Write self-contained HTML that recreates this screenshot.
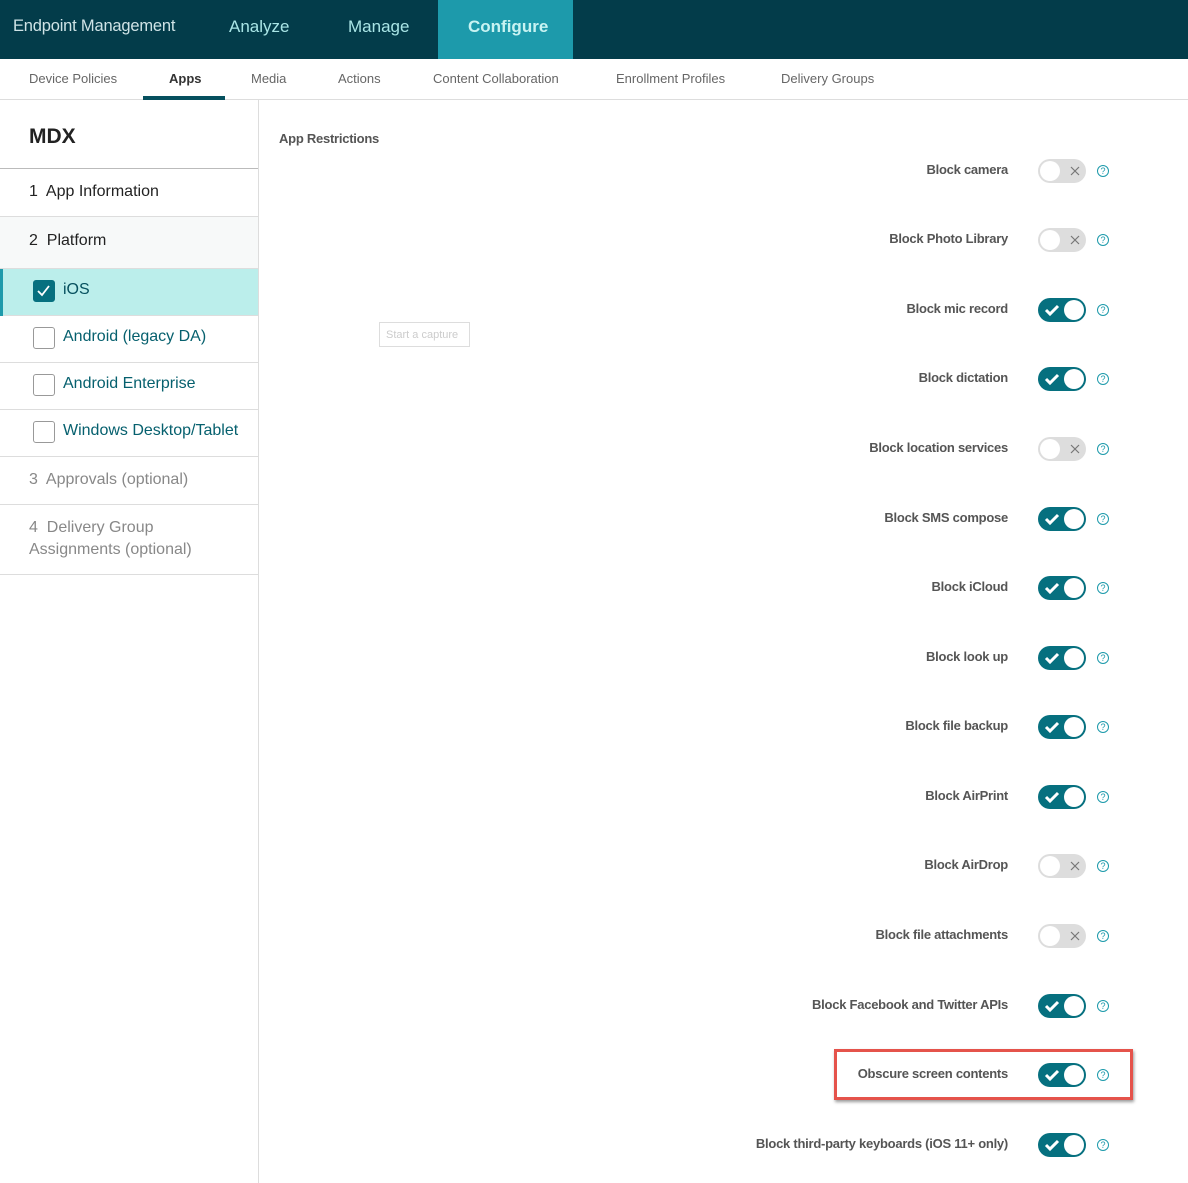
<!DOCTYPE html>
<html><head><meta charset="utf-8"><style>
*{box-sizing:border-box;margin:0;padding:0}
body{width:1188px;height:1183px;position:relative;overflow:hidden;background:#fff;font-family:"Liberation Sans",sans-serif;color:#333}
.top{position:absolute;left:0;top:0;width:1188px;height:59px;background:#033c4a}
.top span{position:absolute;top:17px;font-size:17px;color:#a9e5e6}
.cfg{position:absolute;left:438px;top:0;width:135px;height:59px;background:#1d9aab}
.sub{position:absolute;top:59px;left:0;width:1188px;height:41px;border-bottom:1px solid #ddd}
.sub span{position:absolute;top:12px;font-size:13px;color:#666}
.side{position:absolute;left:0;top:100px;width:259px;height:1083px;border-right:1px solid #ddd}
.row{position:absolute;left:0;width:258px;border-bottom:1px solid #ddd;font-size:16px}
.cb{position:absolute;left:34px;width:22px;height:22px;border:1.5px solid #999;border-radius:3px;background:#fff}
.lbl{position:absolute;right:180px;font-size:13px;font-weight:bold;color:#555;white-space:nowrap;letter-spacing:-0.25px}
.tg{position:absolute;left:1038px;width:48px;height:24px;border-radius:12px}
.on{background:#06707f}.off{background:#ddd}
.knob{position:absolute;top:2px;width:20px;height:20px;border-radius:10px;background:#fff}
.hp{position:absolute;left:1097px;width:12px;height:12px;border:1px solid #1d9aab;border-radius:50%;font-size:9px;line-height:10px;text-align:center;color:#1d9aab}
</style></head><body>
<div class="top">
<span style="left:13px;color:#cfe3e6;font-size:16.5px;letter-spacing:-0.2px">Endpoint Management</span>
<div class="cfg"></div>
<span style="left:229px">Analyze</span>
<span style="left:348px">Manage</span>
<span style="left:468px;font-weight:bold;color:#c8f3f2">Configure</span>
</div>
<div class="sub">
<span style="left:29px">Device Policies</span>
<span style="left:169px;color:#333;font-weight:bold">Apps</span>
<div style="position:absolute;left:143px;top:37px;width:82px;height:4px;background:#06505e"></div>
<span style="left:251px">Media</span>
<span style="left:338px">Actions</span>
<span style="left:433px">Content Collaboration</span>
<span style="left:616px">Enrollment Profiles</span>
<span style="left:781px">Delivery Groups</span>
</div>
<div class="side">
<div class="row" style="top:0;height:69px;border-bottom:1.5px solid #bbb"><span style="position:absolute;left:29px;top:25px;font-size:21px;font-weight:bold;color:#222">MDX</span></div>
<div class="row" style="top:69px;height:48px"><span style="position:absolute;left:29px;top:14px;color:#222">1&nbsp; App Information</span></div>
<div class="row" style="top:117px;height:52px;background:#f7f9f9"><span style="position:absolute;left:29px;top:15px;color:#222">2&nbsp; Platform</span></div>
<div class="row" style="top:169px;height:47px;background:#bbeeeb"><div style="position:absolute;left:0;top:0;width:3px;height:47px;background:#1d9aab"></div>
<div class="cb" style="top:11px;left:33px;background:#06707f;border-color:#06707f"><svg width="19" height="19" viewBox="0 0 19 19" style="position:absolute;left:0;top:0"><path d="M4 10l4 4 7-9" stroke="#fff" stroke-width="1.8" fill="none"/></svg></div>
<span style="position:absolute;left:63px;top:12px;color:#06505e">iOS</span></div>
<div class="row" style="top:216px;height:47px"><div class="cb" style="top:11px;left:33px"></div><span style="position:absolute;left:63px;top:12px;color:#06606e">Android (legacy DA)</span></div>
<div class="row" style="top:263px;height:47px"><div class="cb" style="top:11px;left:33px"></div><span style="position:absolute;left:63px;top:12px;color:#06606e">Android Enterprise</span></div>
<div class="row" style="top:310px;height:47px"><div class="cb" style="top:11px;left:33px"></div><span style="position:absolute;left:63px;top:12px;color:#06606e">Windows Desktop/Tablet</span></div>
<div class="row" style="top:357px;height:48px"><span style="position:absolute;left:29px;top:14px;color:#888">3&nbsp; Approvals (optional)</span></div>
<div class="row" style="top:405px;height:70px"><span style="position:absolute;left:29px;top:12px;color:#888;line-height:22px">4&nbsp; Delivery Group<br>Assignments (optional)</span></div>
</div>
<div style="position:absolute;left:279px;top:131px;font-size:13px;font-weight:bold;color:#555;letter-spacing:-0.25px">App Restrictions</div>
<div style="position:absolute;left:379px;top:322px;width:91px;height:25px;border:1px solid #ddd;font-size:11px;color:#ccc;padding:6px 0 0 6px">Start a capture</div>
<div style="position:absolute;left:834px;top:1049px;width:299px;height:51px;border:3px solid #e5534b;box-shadow:1px 2px 3px rgba(0,0,0,.4)"></div>
<div id="rows"></div>
<script>
var d=[["Block camera",171,0],["Block Photo Library",240,0],["Block mic record",310,1],["Block dictation",379,1],["Block location services",449,0],["Block SMS compose",519,1],["Block iCloud",588,1],["Block look up",658,1],["Block file backup",727,1],["Block AirPrint",797,1],["Block AirDrop",866,0],["Block file attachments",936,0],["Block Facebook and Twitter APIs",1006,1],["Obscure screen contents",1075,1],["Block third-party keyboards (iOS 11+ only)",1145,1]];
var h="";d.forEach(function(r){var y=r[1];
h+='<div class="lbl" style="top:'+(y-9)+'px">'+r[0]+'</div>';
if(r[2])h+='<div class="tg on" style="top:'+(y-12)+'px"><svg width="20" height="24" style="position:absolute;left:4px;top:0"><path d="M4 12l4 4 8-8" stroke="#fff" stroke-width="3" fill="none"/></svg><div class="knob" style="left:26px"></div></div>';
else h+='<div class="tg off" style="top:'+(y-12)+'px"><div class="knob" style="left:2px"></div><svg width="12" height="12" style="position:absolute;left:31px;top:6px"><path d="M2 2l8 8M10 2l-8 8" stroke="#777" stroke-width="1.2"/></svg></div>';
h+='<div class="hp" style="top:'+(y-6)+'px">?</div>';});
document.getElementById("rows").innerHTML=h;
</script>
</body></html>
